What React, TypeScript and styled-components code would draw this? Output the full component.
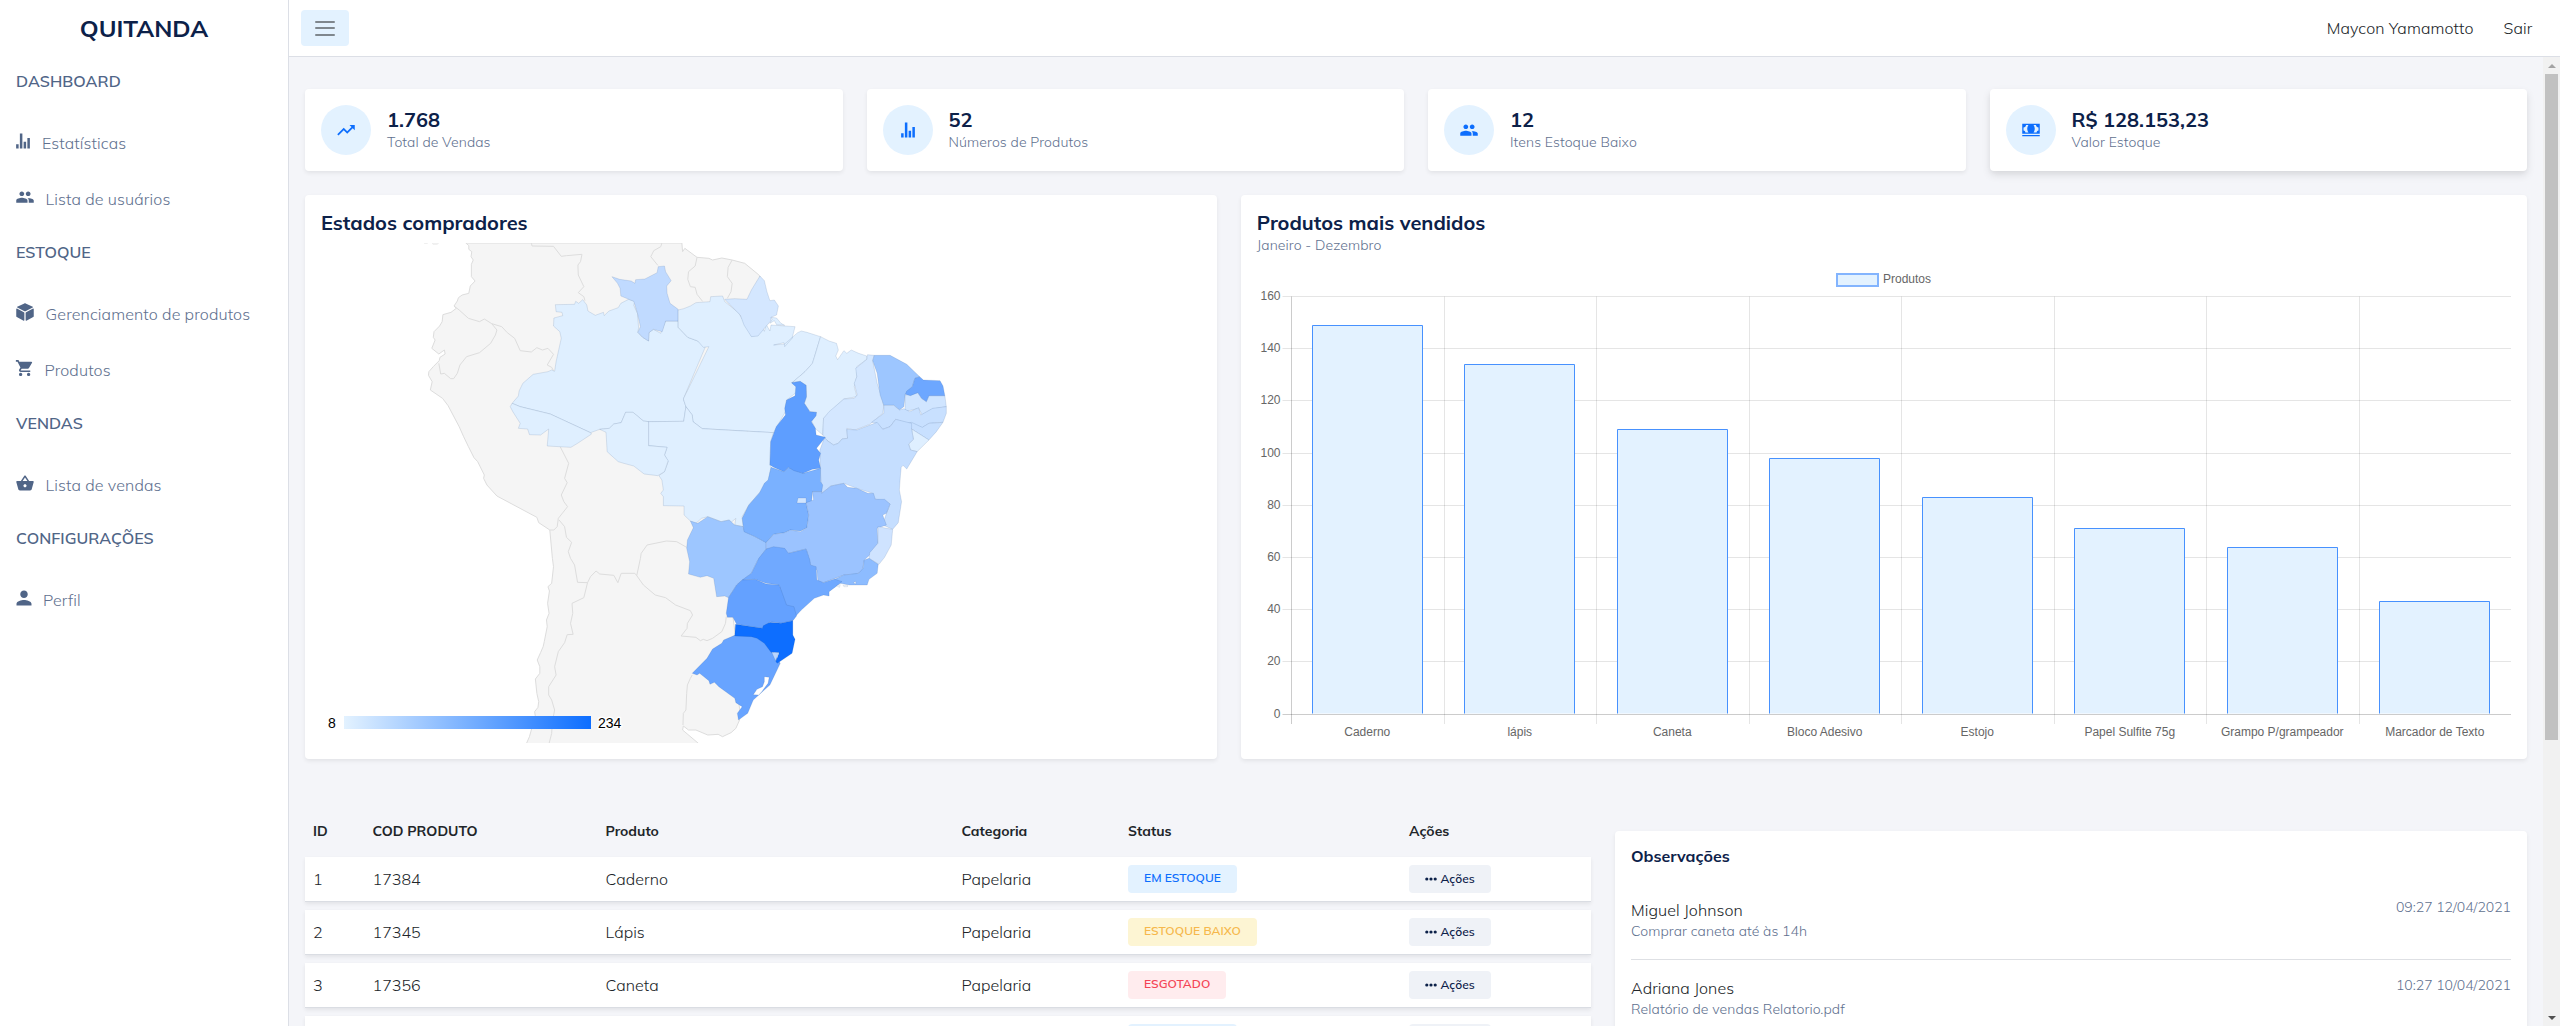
import React from "react";
import styled, { createGlobalStyle } from "styled-components";
import type { IconType } from "react-icons";
import {
  IoMdStats,
  IoMdPeople,
  IoMdCube,
  IoMdCart,
  IoMdBasket,
  IoMdPerson,
  IoMdTrendingUp,
  IoMdCash,
} from "react-icons/io";

const colors = {
  primary: "#0d6efd",
  soft: "#e3f2ff",
  navy: "#0c2149",
  slate: "#506587",
  muted: "#61718f",
  text: "#212529",
  canvas: "#f4f5f9",
  line: "#dcdfe6",
};

const GlobalStyle = createGlobalStyle`
  *, *::before, *::after { box-sizing: border-box; }
  html, body { margin: 0; overflow: hidden; }
  body {
    font-family: Mulish, Nunito, Lato, "Open Sans", sans-serif;
    font-size: 16px;
    line-height: 1.5;
    color: ${colors.text};
    background: ${colors.canvas};
  }
`;

/* ---------- Shell ---------- */

const Shell = styled.div`
  display: flex;
  height: 100vh;
  overflow: hidden;
`;

const Sidebar = styled.aside`
  flex: 0 0 289px;
  background: #fff;
  border-right: 1px solid ${colors.line};
`;

const Brand = styled.div`
  height: 56px;
  line-height: 56px;
  font-size: 24px;
  font-weight: 700;
  text-align: center;
  color: ${colors.navy};
`;

const NavHeading = styled.h2`
  margin: 0;
  padding: 13px 16px 0;
  height: 59px;
  font-size: 16px;
  line-height: 24px;
  font-weight: 650;
  letter-spacing: 0.05px;
  color: ${colors.slate};
`;

const NavLink = styled.a`
  display: flex;
  align-items: center;
  height: 56px;
  padding: 0 16px;
  font-weight: 330;
  letter-spacing: 0.11px;
  color: ${colors.muted};
`;

const NavGlyph = styled.span<{ $trim: number }>`
  display: flex;
  width: ${(p) => 20 - p.$trim * 2}px;
  margin: 0 12px 5px 0;
  color: ${colors.slate};
  svg {
    flex: none;
    margin-left: ${(p) => -p.$trim}px;
  }
`;

const Page = styled.div`
  flex: 1;
  min-width: 0;
  display: flex;
  flex-direction: column;
`;

const Topbar = styled.header`
  flex: 0 0 57px;
  display: flex;
  align-items: center;
  gap: 30px;
  padding: 0 27.5px 0 12px;
  background: #fff;
  border-bottom: 1px solid ${colors.line};
  font-weight: 340;
  letter-spacing: 0.12px;
`;

const MenuButton = styled.button`
  display: grid;
  place-content: center;
  gap: 4.5px;
  width: 48px;
  height: 36px;
  margin-right: auto;
  border: 0;
  border-radius: 4px;
  background: ${colors.soft};
`;

const MenuLine = styled.span`
  width: 20px;
  height: 2px;
  border-radius: 1px;
  background: #7f878e;
`;

const Viewport = styled.div`
  flex: 1;
  min-height: 0;
  display: flex;
`;

const Content = styled.main`
  flex: 1;
  min-width: 0;
  overflow: hidden;
  padding: 32px 16px 0;
`;

const Scrollbar = styled.div`
  flex: 0 0 17px;
  display: flex;
  flex-direction: column;
  align-items: center;
  background: #f1f1f1;
`;

const ScrollArrow = styled.span<{ $down?: boolean }>`
  height: 17px;
  display: flex;
  align-items: center;
  margin-top: ${(p) => (p.$down ? "auto" : "0")};
  &::before {
    content: "";
    border: 4px solid transparent;
    border-width: ${(p) => (p.$down ? "4px 4px 0" : "0 4px 4px")};
    border-top-color: ${(p) => (p.$down ? "#505050" : "transparent")};
    border-bottom-color: ${(p) => (p.$down ? "transparent" : "#a3a3a3")};
  }
`;

const ScrollThumb = styled.span`
  width: 13px;
  height: 666px;
  background: #c1c1c1;
`;

/* ---------- Cards ---------- */

const Card = styled.section<{ $raised?: boolean }>`
  min-width: 0;
  padding: 16px;
  border-radius: 4px;
  background: #fff;
  box-shadow: ${(p) =>
    p.$raised
      ? "0 4px 8px rgba(0, 0, 0, 0.1), 0 2px 4px rgba(0, 0, 0, 0.03)"
      : "0 2px 4px rgba(0, 0, 0, 0.075)"};
`;

const StatRow = styled.div`
  display: grid;
  grid-template-columns: repeat(4, 1fr);
  gap: 24px;
`;

const StatCard = styled(Card)`
  display: flex;
  align-items: center;
  gap: 16px;
  height: 82px;
`;

const StatCircle = styled.span`
  display: grid;
  place-items: center;
  width: 50px;
  height: 50px;
  padding-bottom: 1px;
  border-radius: 50%;
  background: ${colors.soft};
  color: ${colors.primary};
`;

const Title = styled.h3`
  margin: 0;
  font-size: 20px;
  line-height: 24px;
  font-weight: 700;
  color: ${colors.navy};
`;

const Subtitle = styled.p`
  margin: 0;
  font-size: 14px;
  line-height: 21px;
  font-weight: 330;
  letter-spacing: 0.09px;
  color: ${colors.muted};
`;

const ChartRow = styled.div`
  display: grid;
  grid-template-columns: 911.8px 1fr;
  gap: 24px;
  height: 564px;
  margin-top: 24px;
`;

const MapCanvas = styled.svg`
  display: block;
  width: 880px;
  height: 500px;
  margin-top: 8px;
  overflow: hidden;
`;

const BarCanvas = styled.svg`
  display: block;
  width: 1254px;
  height: 487px;
  font-family: "Liberation Sans", Arial, sans-serif;
  font-size: 12px;
`;

const BottomRow = styled.div`
  display: grid;
  grid-template-columns: 1286px 1fr;
  gap: 24px;
  margin-top: 46px;
`;

/* ---------- Table ---------- */

const Table = styled.div`
  display: flex;
  flex-direction: column;
  gap: 8px;
  padding-top: 8px;
`;

const TableLine = styled.div`
  display: grid;
  grid-template-columns: 59.5px 233px 356px 166.5px 281px 1fr;
  align-items: center;
`;

const HeadLine = styled(TableLine)`
  height: 36px;
  padding-top: 1px;
  font-size: 14px;
  font-weight: 700;
`;

const BodyLine = styled(TableLine)`
  height: 45px;
  background: #fff;
  border-bottom: 1px solid #dadde3;
  box-shadow: 0 2px 4px rgba(0, 0, 0, 0.075);
  font-weight: 340;
  letter-spacing: 0.05px;
`;

const Cell = styled.div`
  padding: 0 8px;
  display: flex;
`;

type Tone = "ok" | "low" | "out";

const toneStyles: Record<Tone, [string, string]> = {
  ok: [colors.soft, colors.primary],
  low: ["#fdf5d3", "#f6b84b"],
  out: ["#ffecee", "#f44455"],
};

const Badge = styled.span<{ $tone: Tone }>`
  height: 28px;
  padding: 0 16px;
  border-radius: 4px;
  font-size: 12px;
  line-height: 26px;
  font-weight: 600;
  letter-spacing: 0.05px;
  background: ${(p) => toneStyles[p.$tone][0]};
  color: ${(p) => toneStyles[p.$tone][1]};
`;

const ActionButton = styled.button`
  display: flex;
  align-items: center;
  gap: 4px;
  width: 82px;
  height: 28px;
  padding: 0 0 1px 15.5px;
  border: 0;
  border-radius: 4px;
  background: #eff2f7;
  color: ${colors.navy};
  font: 600 12px/26px Mulish, Nunito, Lato, sans-serif;
`;

/* ---------- Notes ---------- */

const NotesCard = styled(Card)`
  margin-top: 26px;
  height: 320px;
`;

const NotesTitle = styled.h3`
  margin: 0 0 16px;
  font-size: 16px;
  line-height: 19px;
  font-weight: 700;
  color: ${colors.navy};
`;

const Note = styled.article`
  display: flex;
  justify-content: space-between;
  height: 78px;
  padding-top: 19px;
  border-bottom: 1px solid #dee0e4;
`;

const NoteAuthor = styled.div`
  height: 20px;
  line-height: 18px;
  font-weight: 340;
  letter-spacing: 0.06px;
`;

const NoteTime = styled(Subtitle)`
  margin-top: -4px;
  letter-spacing: 0;
`;

/* ---------- Data ---------- */

type NavItem = { label: string; icon: IconType; trim: number };

const nav: { heading: string; items: NavItem[] }[] = [
  {
    heading: "DASHBOARD",
    items: [
      { label: "Estatísticas", icon: IoMdStats, trim: 3 },
      { label: "Lista de usuários", icon: IoMdPeople, trim: 1.2 },
    ],
  },
  {
    heading: "ESTOQUE",
    items: [
      { label: "Gerenciamento de produtos", icon: IoMdCube, trim: 1.2 },
      { label: "Produtos", icon: IoMdCart, trim: 1.8 },
    ],
  },
  { heading: "VENDAS", items: [{ label: "Lista de vendas", icon: IoMdBasket, trim: 1.2 }] },
  { heading: "CONFIGURAÇÕES", items: [{ label: "Perfil", icon: IoMdPerson, trim: 2.5 }] },
];

const stats: { value: string; label: string; icon: IconType }[] = [
  { value: "1.768", label: "Total de Vendas", icon: IoMdTrendingUp },
  { value: "52", label: "Números de Produtos", icon: IoMdStats },
  { value: "12", label: "Itens Estoque Baixo", icon: IoMdPeople },
  { value: "R$ 128.153,23", label: "Valor Estoque", icon: IoMdCash },
];

const sales: [string, number][] = [
  ["Caderno", 149],
  ["lápis", 134],
  ["Caneta", 109],
  ["Bloco Adesivo", 98],
  ["Estojo", 83],
  ["Papel Sulfite 75g", 71],
  ["Grampo P/grampeador", 64],
  ["Marcador de Texto", 43],
];

const products: [string, string, string, Tone, string][] = [
  ["1", "17384", "Caderno", "ok", "EM ESTOQUE"],
  ["2", "17345", "Lápis", "low", "ESTOQUE BAIXO"],
  ["3", "17356", "Caneta", "out", "ESGOTADO"],
  ["4", "17357", "Estojo", "ok", "EM ESTOQUE"],
];

const notes = [
  { author: "Miguel Johnson", body: "Comprar caneta até às 14h", time: "09:27 12/04/2021" },
  { author: "Adriana Jones", body: "Relatório de vendas Relatorio.pdf", time: "10:27 10/04/2021" },
];

/* South America outside Brazil: one land mass plus its inner borders */
const land =
  "178,39 186,47 186,58 194,65 192,80 198,90 193,103 193,140 203,153 190,168 186,190 168,195 158,203 155,213 146,228 152,235 138,247 116,254 114,275 107,288 92,305 90,322 95,330 86,355 105,372 120,360 122,372 108,382 106,392 90,410 78,425 77,436 87,455 82,480 115,505 130,527 160,590 172,620 185,650 200,683 210,695 228,735 226,745 235,765 262,798 370,862 375,878 405,900 412,985 415,1010 410,1060 400,1070 404,1083 399,1120 403,1150 396,1170 398,1190 390,1235 387,1250 380,1268 371,1290 378,1310 378,1330 366,1347 370,1390 375,1415 373,1432 364,1445 366,1460 355,1500 350,1520 340,1545 812,1545 764,1500 766,1488 780,1500 800,1500 832,1515 860,1513 872,1520 895,1508 908,1495 918,1470 920,1450 900,1300 900,1218 907,1218 900,1160 940,900 940,300 973,138 965,130 932,100 898,90 870,84 845,90 835,85 803,82 770,55 764,65 762,39";

const landBorders = [
  "355,39 357,48 415,49 436,79 450,77 492,73 488,95 481,105 482,135 497,170 482,188 497,200 500,212",
  "708,39 705,50 686,62 678,80 697,106",
  "803,82 798,108 780,125 778,148 785,170 798,172 803,193 818,214",
  "898,90 887,112 885,140 898,160 895,185 885,205",
  "146,228 160,240 185,265 215,275 228,267 248,281 262,300 258,315 245,340 215,368 180,380 162,405 155,430 145,446 137,446 120,430 110,432 105,400",
  "248,281 275,290 290,308 310,325 325,362 355,366 370,353 385,360 400,355 415,373 398,405 410,412 415,422",
  "433,650 456,700 445,745 452,758 436,795 443,815 453,830 428,865 425,890 416,900 405,900",
  "430,870 445,890 450,922 464,937 455,965 461,985 472,1005 480,1057 507,1058",
  "507,1058 497,1103 465,1120 467,1150 461,1180 468,1213 452,1214 445,1238 428,1265 418,1310 422,1335 402,1370 402,1395 410,1410 418,1440 412,1475 410,1510 402,1545",
  "507,1058 515,1040 530,1023 540,1032 578,1036 589,1058 598,1030 635,1030 640,1037",
  "640,1037 650,985 652,970 668,945 720,933 748,935 775,952",
  "640,1037 658,1065 690,1095 718,1103 745,1125 785,1142 791,1155 777,1180 776,1195 760,1218 800,1222 812,1232 820,1228 830,1232 845,1225 870,1205 880,1180 882,1160",
  "790,1335 785,1345 777,1365 775,1390 773,1440 766,1450 765,1485",
];

/* Brazilian states: [fill, outline] */
const states: [string, string][] = [
  ["#dfefff", "420,224 472,223 475,214 483,220 494,209 505,225 508,243 528,256 550,247 552,257 565,243 590,233 597,220 618,208 635,214 632,226 642,250 645,293 643,307 656,322 672,333 673,308 685,298 705,310 718,273 752,273 752,292 778,322 805,333 825,352 766,507 773,530 767,574 672,575 658,573 630,547 610,547 598,578 578,582 566,595 540,598 515,608 406,552 325,530 303,520 320,498 322,483 332,460 360,433 400,425 410,420 418,424 422,395 436,325 432,305 415,288 416,264 440,257 438,247 422,245"],
  ["#c0daff", "573,140 594,148 625,153 635,160 637,149 662,147 695,128 698,110 715,108 718,125 733,152 721,168 722,190 730,220 752,238 752,273 718,273 709,305 685,298 673,308 672,333 656,322 643,307 650,290 642,250 632,214 597,198 595,175 588,160"],
  ["#dfefff", "752,240 767,236 785,228 800,218 838,215 840,200 872,198 878,215 915,248 935,285 950,318 968,315 980,295 985,304 990,283 1000,303 1003,285 1068,290 1060,325 1040,350 1038,338 1010,345 1040,342 1075,308 1085,303 1100,307 1137,320 1122,375 1115,400 1095,425 1060,458 1068,460 1080,480 1045,510 1042,545 1010,608 817,596 792,575 790,555 773,530 766,507 835,350 820,352 805,333 778,322 752,292"],
  ["#d4e7ff", "973,138 985,152 992,185 1000,212 1012,210 1023,228 1018,255 1003,262 1003,272 985,295 968,318 950,320 930,285 920,255 890,222 878,208 905,206 938,208 950,180"],
  ["#dfefff", "1003,262 1018,264 1030,280 1040,286 1018,284 1012,272 1000,280 1006,268"],
  ["#dfefff", "1137,320 1160,333 1180,340 1185,360 1178,378 1183,389 1200,362 1208,370 1220,360 1240,370 1262,378 1262,388 1235,410 1235,440 1228,470 1235,500 1200,507 1145,565 1143,615 1122,595 1112,570 1126,547 1108,545 1093,520 1099,500 1098,466 1080,454 1060,458 1095,425 1115,400 1122,375"],
  ["#d4e7ff", "1264,374 1282,376 1278,392 1290,460 1302,500 1308,528 1305,550 1270,583 1230,600 1208,595 1210,625 1195,627 1185,640 1172,645 1155,632 1143,615 1145,565 1160,545 1200,507 1228,505 1236,495 1228,460 1235,440 1232,415 1262,388"],
  ["#9dc6ff", "1282,376 1325,376 1370,403 1405,440 1392,445 1385,470 1366,493 1362,530 1350,540 1335,526 1308,526 1298,495 1290,430 1278,392"],
  ["#d0e5ff", "1366,495 1400,488 1410,505 1423,515 1430,497 1473,497 1477,530 1440,537 1412,555 1402,535 1365,545"],
  ["#c8e0ff", "1308,526 1335,526 1350,540 1362,536 1378,545 1402,533 1408,555 1440,535 1477,530 1477,550 1468,577 1430,580 1412,593 1370,580 1340,568 1325,590 1305,598 1290,580 1275,577 1308,550"],
  ["#6da7ff", "1405,440 1415,450 1460,452 1468,468 1473,497 1430,497 1423,515 1410,505 1400,488 1380,497 1366,493 1370,483 1385,470 1392,445"],
  ["#c8e0ff", "1370,580 1383,577 1412,592 1430,580 1468,577 1450,605 1430,630 1383,597"],
  ["#dfefff", "1383,597 1430,630 1398,665 1380,660 1375,642 1388,628"],
  ["#c5deff", "1208,598 1235,600 1290,577 1305,598 1325,590 1340,568 1383,580 1383,597 1388,628 1375,642 1380,660 1398,665 1370,717 1360,706 1355,712 1353,735 1350,780 1356,815 1347,878 1332,898 1305,885 1315,850 1325,822 1280,805 1278,790 1235,775 1200,760 1165,768 1140,790 1137,735 1135,660 1148,622 1155,632 1172,645 1185,640 1195,627 1210,625"],
  ["#dfefff", "672,575 767,574 773,530 790,555 792,575 817,596 1010,608 1002,635 1000,705 1003,712 995,760 972,788 943,825 925,860 928,890 905,885 908,865 895,877 890,870 868,875 832,860 815,865 800,880 785,873 768,855 768,828 712,827 712,800 705,790 712,780 708,750 700,737 715,725 725,695 715,675 722,652 672,647"],
  ["#dfefff", "557,607 540,598 566,595 578,582 598,578 610,547 630,547 658,573 672,575 672,647 722,652 715,675 725,692 715,725 697,737 660,732 632,708 605,700 590,695 560,665"],
  ["#dfefff", "303,520 325,530 406,552 515,608 518,612 480,640 462,652 398,648 402,597 380,615 350,614 345,597 320,595 325,580 305,545 298,530"],
  ["#9dc6ff", "785,873 805,880 832,860 868,875 890,870 905,885 928,890 932,905 990,937 990,957 965,995 950,1030 910,1065 888,1103 878,1098 856,1100 848,1045 830,1037 812,1042 780,1032 783,995 775,955 777,930 793,893"],
  ["#7ab1ff", "1003,712 1038,725 1050,712 1090,730 1137,715 1137,755 1143,765 1140,785 1115,785 1113,815 1098,820 1105,855 1100,893 1083,903 1055,900 1040,908 1010,913 990,938 960,920 930,905 925,865 943,825 972,788 985,760 995,750"],
  ["#5e9eff", "1058,458 1082,454 1098,466 1099,500 1093,520 1108,545 1126,547 1125,557 1112,575 1123,595 1125,615 1150,622 1126,655 1137,670 1132,690 1137,715 1115,718 1090,730 1065,722 1050,712 1038,725 1010,712 1000,705 1002,635 1017,590 1042,555 1040,535 1045,510 1068,497 1070,470"],
  ["#9bc3ff", "1140,790 1165,768 1200,760 1210,772 1235,775 1265,790 1280,790 1285,808 1310,808 1325,822 1315,850 1305,855 1315,885 1290,895 1292,940 1270,975 1255,990 1250,1022 1235,1032 1200,1035 1145,1058 1130,1055 1127,1020 1110,1005 1098,957 1050,970 1035,955 990,957 990,938 1010,913 1040,908 1055,900 1083,905 1100,893 1105,855 1098,818 1118,810 1115,785 1140,785"],
  ["#d0e5ff", "1076,804 1098,804 1098,819 1073,819"],
  ["#cfe3ff", "1292,890 1332,898 1328,945 1310,982 1295,1003 1268,985 1270,968 1292,940"],
  ["#8dbcff", "1268,985 1293,1003 1290,1030 1268,1048 1263,1065 1215,1065 1190,1060 1175,1048 1200,1035 1240,1030 1252,1015 1255,990"],
  ["#70a9ff", "990,957 1010,950 1040,955 1050,970 1098,957 1108,990 1110,1005 1125,1010 1127,1050 1145,1058 1175,1047 1195,1055 1178,1070 1160,1085 1160,1098 1145,1095 1120,1105 1085,1140 1070,1158 1040,1125 1025,1065 990,1060 960,1048 925,1050 950,1030 970,985"],
  ["#64a1ff", "925,1050 960,1048 990,1062 1025,1065 1032,1085 1045,1125 1065,1130 1072,1158 1062,1172 1030,1180 1000,1175 980,1195 910,1183 900,1162 885,1162 882,1150 888,1103 910,1065"],
  ["#68a4ff", "875,1230 905,1216 940,1205 985,1215 1000,1250 1028,1300 1000,1365 955,1410 940,1450 915,1470 912,1450 925,1430 908,1418 905,1405 862,1370 850,1357 838,1363 835,1352 810,1330 803,1335 790,1330 830,1285 845,1257 870,1240"],
  ["#0d6eff", "907,1183 980,1195 982,1187 1000,1177 1030,1180 1062,1172 1062,1215 1068,1228 1060,1270 1020,1300 1016,1295 1025,1268 1003,1267 985,1240 965,1225 950,1220 905,1218"],
];

const axisTicks = [0, 20, 40, 60, 80, 100, 120, 140, 160];

/* ---------- Pieces ---------- */

function BrazilMap() {
  return (
    <MapCanvas viewBox="0 0 880 500">
      <defs>
        <linearGradient id="scale">
          <stop offset="0" stopColor="#e3f2ff" />
          <stop offset="1" stopColor="#0d6eff" />
        </linearGradient>
      </defs>
      <svg x="79" y="0" width="580" height="500" viewBox="0 39 1568 1500" preserveAspectRatio="none">
        <g fill="none" stroke="#dddddd" strokeLinejoin="round">
          <polygon points={land} fill="#f5f5f5" vectorEffect="non-scaling-stroke" />
          <path d="M65,39h10l-5,2z M87,39h17l-3,4h-12z" vectorEffect="non-scaling-stroke" fill="#f5f5f5" stroke="#eee" />
          {landBorders.map((points) => (
            <polyline key={points} points={points} vectorEffect="non-scaling-stroke" />
          ))}
        </g>
        <g stroke="rgba(30,70,120,0.13)" strokeLinejoin="round">
          {states.map(([fill, points]) => (
            <polygon key={points} points={points} fill={fill} vectorEffect="non-scaling-stroke" />
          ))}
          <path d="M985,1340L998,1342L995,1360L978,1385L970,1395L955,1394L965,1378L980,1370L985,1355Z" fill="#fff" vectorEffect="non-scaling-stroke" />
          <path d="M1005,1267L1025,1268L1015,1292Z" fill="#b9d6ff" vectorEffect="non-scaling-stroke" />
          <path d="M1180,1067l10,-3l-2,8z M1198,1066h12v4h-10z M1226,1058l6,-4v8z" fill="#fff" vectorEffect="non-scaling-stroke" />
        </g>
      </svg>
      <rect x="23" y="473" width="247" height="13" fill="url(#scale)" />
      <g fontFamily='"Liberation Sans", Arial, sans-serif' fontSize="14" stroke="#fff" strokeWidth="3" paintOrder="stroke" strokeLinejoin="round">
        <text x="7" y="484.5">8</text>
        <text x="277" y="484.5">234</text>
      </g>
    </MapCanvas>
  );
}

function SalesChart() {
  const left = 34.5;
  const top = 40.5;
  const step = 152.5;
  const height = 417.5;
  const base = top + height;
  const barWidth = 110;
  const snap = (n: number) => Math.floor(n) + 0.5;
  return (
    <BarCanvas viewBox="0 0 1254 487">
      <rect x="580" y="18" width="41" height="12" fill={colors.soft} stroke="#83b4fe" strokeWidth="2" />
      <text x="626" y="27" fill="#666">Produtos</text>
      {axisTicks.map((tick) => {
        const y = snap(base - (tick / 160) * height);
        return (
          <g key={tick}>
            <line x1={left - 9} x2={left + step * 8} y1={y} y2={y} stroke={tick ? "rgba(0,0,0,0.1)" : "rgba(0,0,0,0.2)"} />
            <text x={left - 11} y={y + 3} textAnchor="end" fill="#666">{tick}</text>
          </g>
        );
      })}
      {sales.map(([name], i) => (
        <line
          key={name}
          x1={snap(left + step * i)}
          x2={snap(left + step * i)}
          y1={top}
          y2={base + 10}
          stroke={i ? "rgba(0,0,0,0.1)" : "rgba(0,0,0,0.2)"}
        />
      ))}
      {sales.map(([name, amount], i) => {
        const center = left + step * (i + 0.5) - 0.5;
        const x = snap(center - barWidth / 2);
        const y = snap(base - (amount / 160) * height);
        return (
          <g key={name}>
            <rect x={x} y={y} width={barWidth} height={base - y - 0.5} fill={colors.soft} />
            <path d={`M${x},${base - 0.5}V${y}h${barWidth}V${base - 0.5}`} fill="none" stroke="#4791fe" />
            <text x={center} y={base + 21.5} textAnchor="middle" fill="#666">{name}</text>
          </g>
        );
      })}
    </BarCanvas>
  );
}

function Dots() {
  return (
    <svg width="12" height="4" viewBox="0 0 12 4" fill="currentColor">
      <circle cx="1.8" cy="2" r="1.6" />
      <circle cx="6" cy="2" r="1.6" />
      <circle cx="10.2" cy="2" r="1.6" />
    </svg>
  );
}

export default function App() {
  return (
    <>
      <GlobalStyle />
      <Shell>
        <Sidebar>
          <Brand>QUITANDA</Brand>
          {nav.map(({ heading, items }) => (
            <React.Fragment key={heading}>
              <NavHeading>{heading}</NavHeading>
              {items.map(({ label, icon: Icon, trim }) => (
                <NavLink key={label}>
                  <NavGlyph $trim={trim}>
                    <Icon size={20} />
                  </NavGlyph>
                  {label}
                </NavLink>
              ))}
            </React.Fragment>
          ))}
        </Sidebar>
        <Page>
          <Topbar>
            <MenuButton aria-label="Menu">
              <MenuLine />
              <MenuLine />
              <MenuLine />
            </MenuButton>
            <span>Maycon Yamamotto</span>
            <span>Sair</span>
          </Topbar>
          <Viewport>
            <Content>
              <StatRow>
                {stats.map(({ value, label, icon: Icon }, i) => (
                  <StatCard key={label} $raised={i === 3}>
                    <StatCircle>
                      <Icon size={20} />
                    </StatCircle>
                    <div>
                      <Title>{value}</Title>
                      <Subtitle>{label}</Subtitle>
                    </div>
                  </StatCard>
                ))}
              </StatRow>
              <ChartRow>
                <Card>
                  <Title>Estados compradores</Title>
                  <BrazilMap />
                </Card>
                <Card>
                  <Title>Produtos mais vendidos</Title>
                  <Subtitle>Janeiro - Dezembro</Subtitle>
                  <SalesChart />
                </Card>
              </ChartRow>
              <BottomRow>
                <Table>
                  <HeadLine>
                    {["ID", "COD PRODUTO", "Produto", "Categoria", "Status", "Ações"].map((name) => (
                      <Cell key={name}>{name}</Cell>
                    ))}
                  </HeadLine>
                  {products.map(([id, code, name, tone, status]) => (
                    <BodyLine key={id}>
                      <Cell>{id}</Cell>
                      <Cell>{code}</Cell>
                      <Cell>{name}</Cell>
                      <Cell>Papelaria</Cell>
                      <Cell>
                        <Badge $tone={tone}>{status}</Badge>
                      </Cell>
                      <Cell>
                        <ActionButton>
                          <Dots />
                          Ações
                        </ActionButton>
                      </Cell>
                    </BodyLine>
                  ))}
                </Table>
                <NotesCard>
                  <NotesTitle>Observações</NotesTitle>
                  {notes.map(({ author, body, time }) => (
                    <Note key={author}>
                      <div>
                        <NoteAuthor>{author}</NoteAuthor>
                        <Subtitle>{body}</Subtitle>
                      </div>
                      <NoteTime>{time}</NoteTime>
                    </Note>
                  ))}
                </NotesCard>
              </BottomRow>
            </Content>
            <Scrollbar>
              <ScrollArrow />
              <ScrollThumb />
              <ScrollArrow $down />
            </Scrollbar>
          </Viewport>
        </Page>
      </Shell>
    </>
  );
}
